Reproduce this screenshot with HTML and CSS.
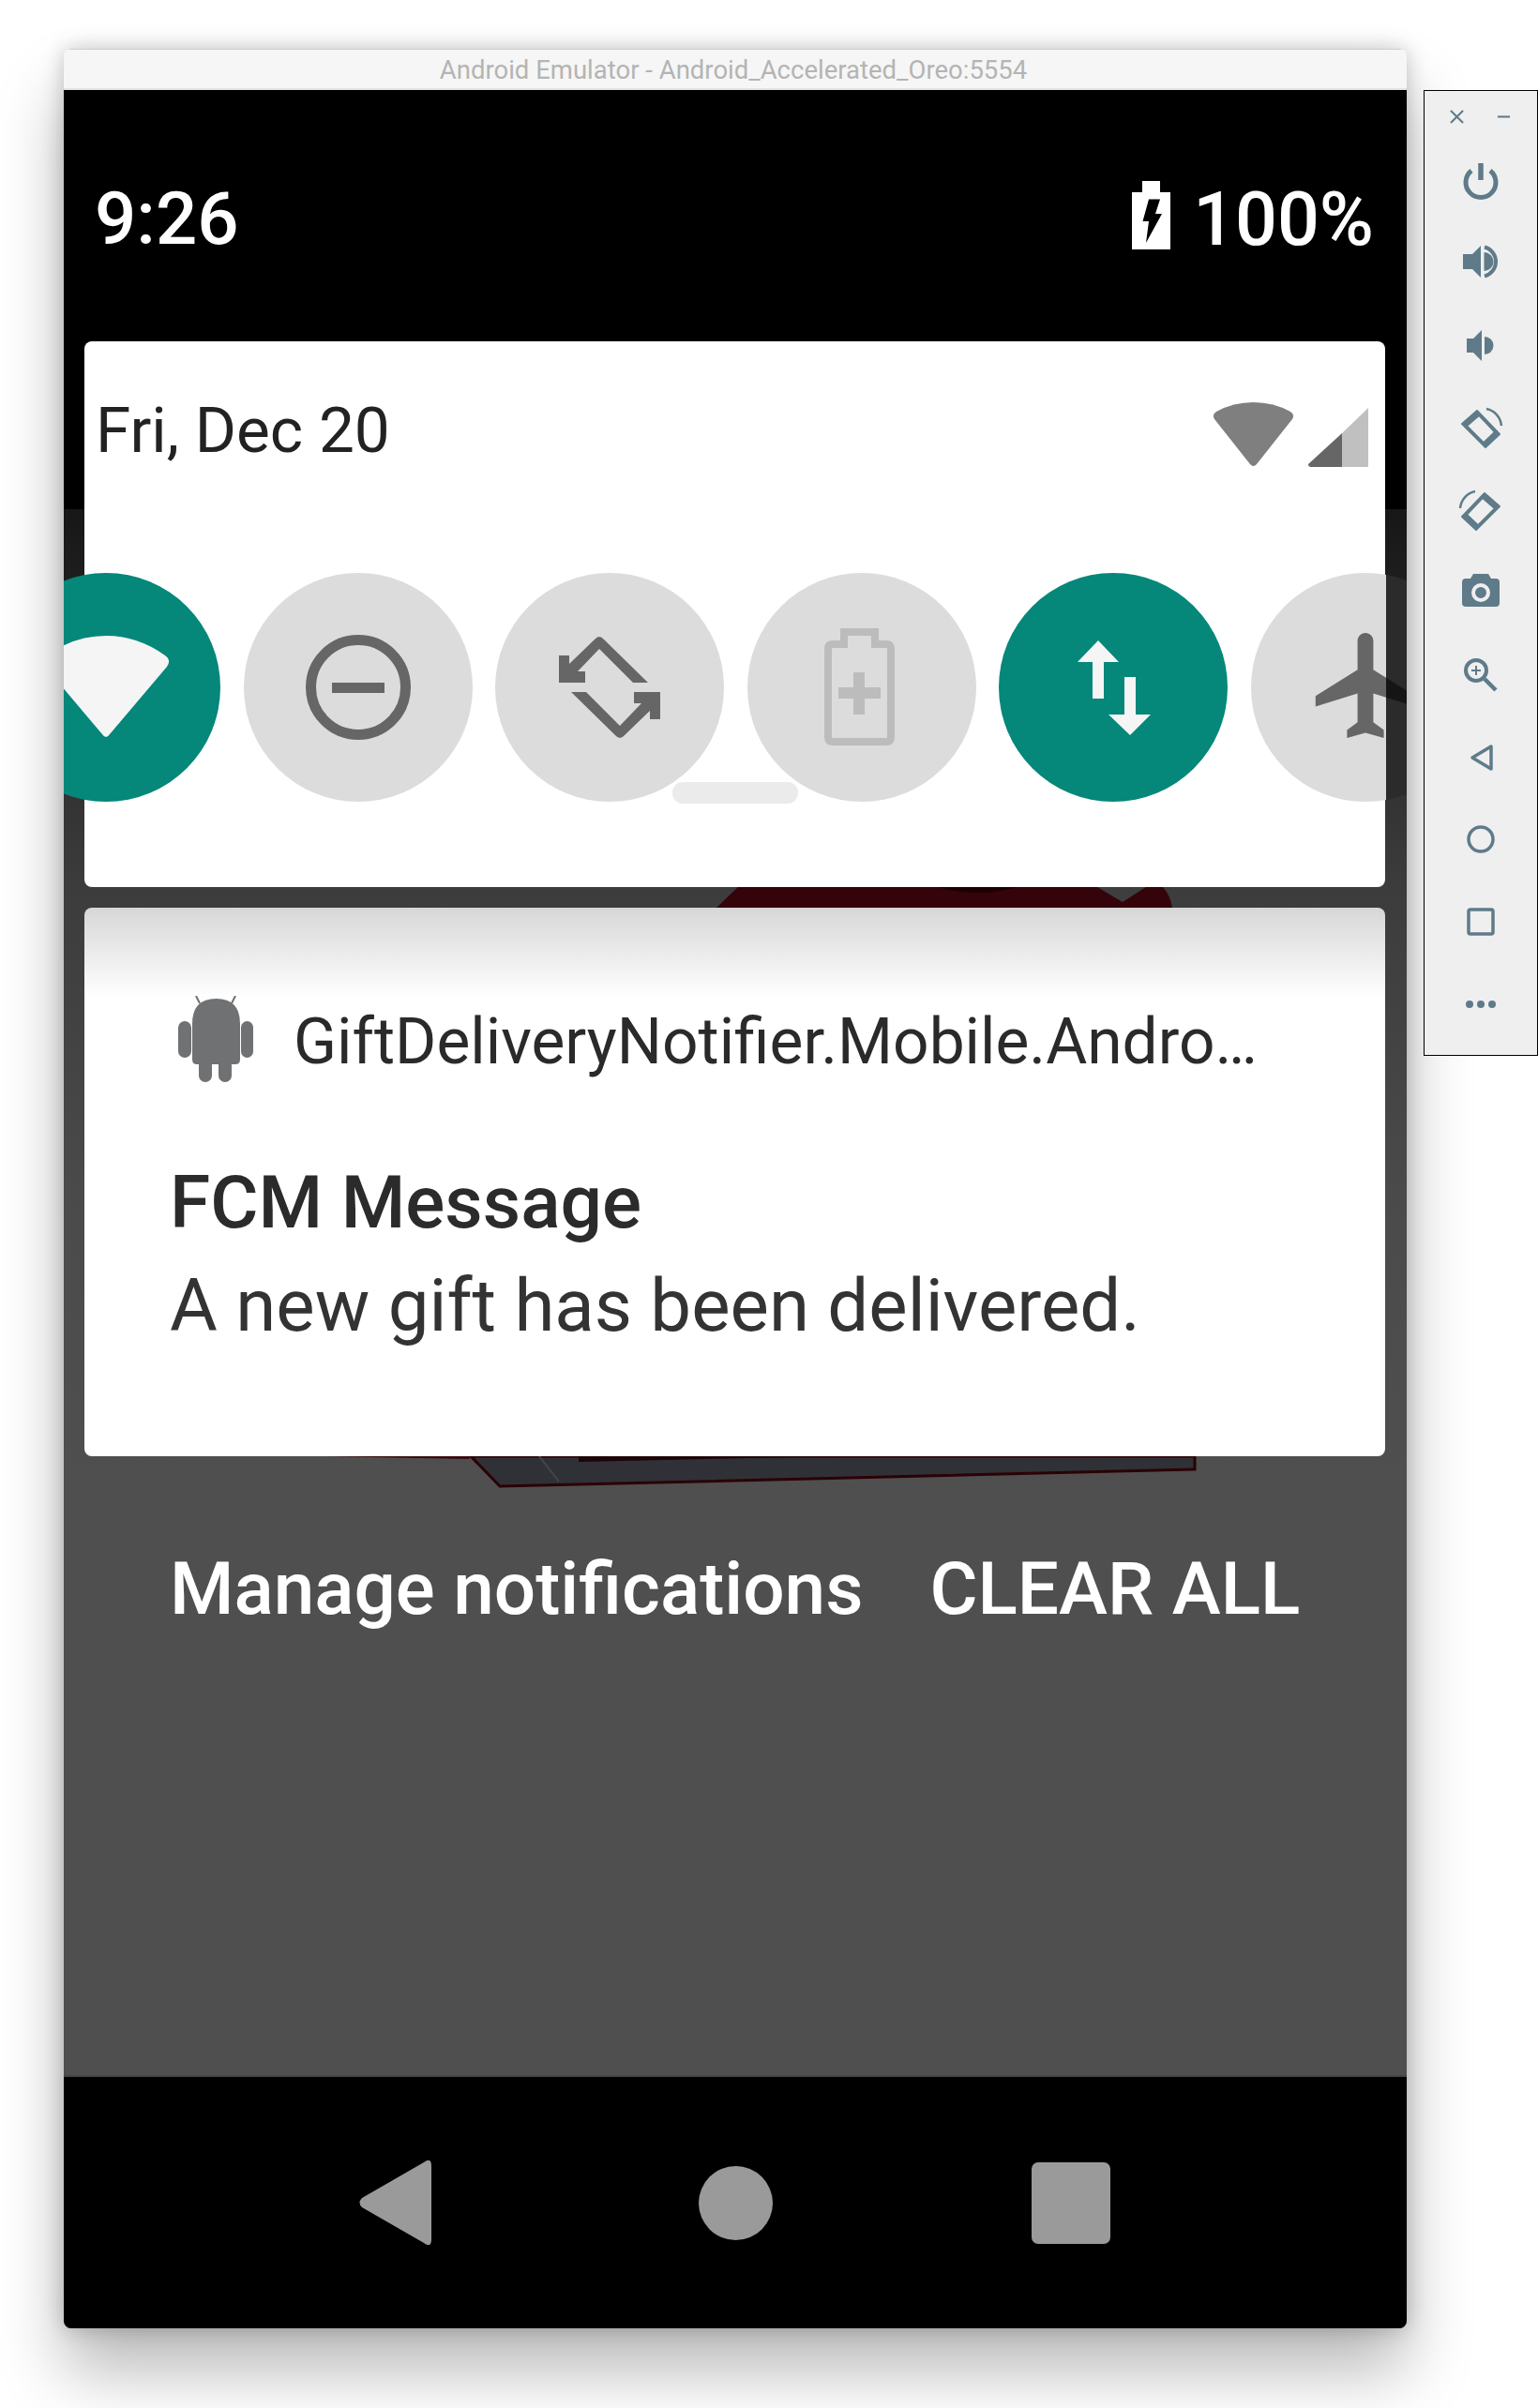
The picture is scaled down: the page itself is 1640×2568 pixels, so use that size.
FILE: index.html
```html
<!DOCTYPE html>
<html lang="en">
<head>
    <meta charset="UTF-8">
    <meta name="viewport" content="width=device-width, initial-scale=1.0">
    <title>Android Emulator</title>
    <link rel="stylesheet" href="styles.css">
</head>
<body>
    <div class="window">
        <div class="titlebar">Android Emulator - Android_Accelerated_Oreo:5554</div>
        <div class="screen">
            <!-- app behind the shade, only bits of it show between the cards -->
            <svg class="backdrop" viewBox="68 96 1432 2387">
                <path d="M787 946 L764 968 H1250 Q1248 955 1240 946Z" fill="#35030a"/>
                <path d="M1170 946 L1197 962 L1222 946Z" fill="#3e3e3e"/>
                <path d="M1000 946 Q1040 958 1085 946Z" fill="#1c0003"/>
                <path d="M345 1553 L500 1556 L502 1553Z" fill="#3a0a0e"/>
                <path d="M502 1553 L533 1585 L1274 1567 V1553Z" fill="#303136" stroke="#2a0206" stroke-width="3"/>
                <path d="M617 1553 V1559 L890 1553Z" fill="#1d0508"/>
                <path d="M575 1553 L596 1580" fill="none" stroke="#45464b" stroke-width="2"/>
            </svg>

            <div class="statusbar">
                <span class="clock">9:26</span>
                <div class="status-right">
                    <svg class="status-battery" viewBox="0 0 41 73">
                        <path d="M11 0H30V12H41V73H0V12H11Z" fill="#fff"/>
                        <path d="M18 19.5H30L25 35H32L15 66L18 43H11.5Z" fill="#000"/>
                    </svg>
                    <span class="percent">100%</span>
                </div>
            </div>

            <div class="qs">
                <div class="qs-top">
                    <span class="date">Fri, Dec 20</span>
                    <div class="qs-signal">
                        <svg class="qs-wifi" viewBox="0 0 87 68">
                            <path d="M40 66L2 18Q-1 13 4 10Q22 0 43.500 0Q65 0 83 10Q88 13 85 18L47 66Q43.500 70 40 66Z" fill="#7f7f7f"/>
                        </svg>
                        <svg class="qs-cell" viewBox="0 0 64 63">
                            <path d="M36 27L64 0V63H36Z" fill="#c0c0c0"/>
                            <path d="M0 60L36 27V63H3Q0 63 0 60Z" fill="#666"/>
                        </svg>
                    </div>
                </div>
                <div class="tiles">
                    <div class="tile tile-on">
                        <svg viewBox="0 0 244 244">
                            <path d="M118 172L57 100Q52 93 59 88Q88 67 122 67Q156 67 185 88Q192 93 187 100L126 172Q122 178 118 172Z" fill="#f5f5f5"/>
                        </svg>
                    </div>
                    <div class="tile">
                        <svg viewBox="0 0 244 244">
                            <circle cx="122" cy="122" r="50.500" fill="none" stroke="#666" stroke-width="11"/>
                            <rect x="94" y="117" width="56" height="11" fill="#666"/>
                        </svg>
                    </div>
                    <div class="tile">
                        <svg viewBox="0 0 244 244">
                            <g transform="translate(122 122)" fill="#666">
                                <path d="M-54 -5V-34H-43V-25L-16 -51Q-11 -57 -6 -51L41 -5H25L-11 -41L-34 -17H-26V-5Z"/>
                                <path transform="rotate(180)" d="M-54 -5V-34H-43V-25L-16 -51Q-11 -57 -6 -51L41 -5H25L-11 -41L-34 -17H-26V-5Z"/>
                            </g>
                        </svg>
                    </div>
                    <div class="tile">
                        <svg viewBox="0 0 244 244">
                            <path d="M103 63H136V76H148Q153 76 153 81V175Q153 180 148 180H91Q86 180 86 175V81Q86 76 91 76H103Z" fill="none" stroke="#bcbcbc" stroke-width="8"/>
                            <rect x="97" y="122" width="45" height="12" fill="#bcbcbc"/>
                            <rect x="113" y="106" width="12" height="45" fill="#bcbcbc"/>
                        </svg>
                    </div>
                    <div class="tile tile-on">
                        <svg viewBox="0 0 244 244">
                            <path d="M106 72L128 95H112V134H100V95H84Z" fill="#f5f5f5"/>
                            <path d="M134 111H146V151H162L140 173L117 151H134Z" fill="#f5f5f5"/>
                        </svg>
                    </div>
                    <!-- last tile runs past the card, the part outside sits under the scrim -->
                    <svg class="tile-plane" viewBox="0 0 244 244">
                        <defs>
                            <clipPath id="in-card"><rect width="144" height="244"/></clipPath>
                            <clipPath id="off-card"><rect x="144" width="100" height="244"/></clipPath>
                            <path id="plane" d="M21 16v-2l-8-5V3.500c0-.83-.67-1.500-1.500-1.500S10 2.670 10 3.500V9l-8 5v2l8-2.500V19l-2 1.500V22l3.500-1 3.500 1v-1.500L13 19v-5.500l8 2.500z"/>
                        </defs>
                        <g clip-path="url(#in-card)">
                            <circle cx="122" cy="122" r="122" fill="#dcdcdc"/>
                            <use href="#plane" transform="translate(57.600 52.800) scale(5.600)" fill="#666"/>
                        </g>
                        <g clip-path="url(#off-card)">
                            <circle cx="122" cy="122" r="122" fill="#2b2b2b"/>
                            <use href="#plane" transform="translate(57.600 52.800) scale(5.600)" fill="#151515"/>
                        </g>
                    </svg>
                </div>
                <div class="handle"></div>
            </div>

            <div class="notif">
                <div class="notif-head">
                    <svg class="notif-icon" viewBox="0 0 80 92">
                        <g fill="#707173">
                            <path d="M15 30Q15 3 40.500 3Q66 3 66 30V68Q66 73 61 73H20Q15 73 15 68Z"/>
                            <rect x="0" y="27" width="14" height="39" rx="7"/>
                            <rect x="67" y="27" width="13" height="39" rx="6.500"/>
                            <rect x="22" y="60" width="14" height="32" rx="7"/>
                            <rect x="43" y="60" width="14" height="32" rx="7"/>
                        </g>
                        <path d="M23 8L19 0M57 8L61 0" stroke="#707173" stroke-width="2"/>
                    </svg>
                    <span class="notif-app">GiftDeliveryNotifier.Mobile.Andro…</span>
                </div>
                <div class="notif-title">FCM Message</div>
                <div class="notif-text">A new gift has been delivered.</div>
            </div>

            <div class="actions">
                <span>Manage notifications</span>
                <span>CLEAR ALL</span>
            </div>

            <div class="navbar">
                <svg class="nav-back" viewBox="0 0 78 90">
                    <path d="M70 2Q78 -4 78 6V84Q78 94 70 88L4 50Q-1 45 4 40Z" fill="#9a9a9a"/>
                </svg>
                <div class="nav-home"></div>
                <div class="nav-recent"></div>
            </div>
        </div>
    </div>

    <div class="toolbar">
        <div class="tool-head">
            <svg viewBox="0 0 16 16"><path d="M1 1L15 15M15 1L1 15"/></svg>
            <svg viewBox="0 0 16 16"><path d="M1 8H15"/></svg>
        </div>
        <div class="tool">
            <svg viewBox="0 0 48 48">
                <path class="line" d="M24 6V24" stroke-width="5.500"/>
                <path class="line" d="M14 14A16 16 0 1 0 34 14" stroke-width="5"/>
            </svg>
        </div>
        <div class="tool">
            <svg viewBox="0 0 48 48">
                <path d="M5 15H15L24 6V40L15 31H5Z"/>
                <path d="M27.500 13A10 10 0 0 1 27.500 33Z"/>
                <path class="line" d="M28 7.500A16 16 0 0 1 28 38.500" stroke-width="4"/>
            </svg>
        </div>
        <div class="tool">
            <svg viewBox="0 0 48 48">
                <path d="M9 17H16L25 8V41L16 32H9Z"/>
                <path d="M28 15A9.500 9.500 0 0 1 28 34Z"/>
            </svg>
        </div>
        <div class="tool">
            <svg viewBox="0 0 48 48">
                <path class="phone" d="M4 20L20 6L44 31L29 45ZM9 22.300L22 10.900L39 28.700L27 40.100Z"/>
                <path class="line" d="M30 4A20 20 0 0 1 46 22" stroke-width="2.500"/>
            </svg>
        </div>
        <div class="tool">
            <svg viewBox="0 0 48 48">
                <g transform="translate(48 0) scale(-1 1)">
                    <path class="phone" d="M4 20L20 6L44 31L29 45ZM9 22.300L22 10.900L39 28.700L27 40.100Z"/>
                    <path class="line" d="M30 4A20 20 0 0 1 46 22" stroke-width="2.500"/>
                </g>
            </svg>
        </div>
        <div class="tool">
            <svg viewBox="0 0 48 48">
                <path d="M16 5H32L35 10H40Q44 10 44 14V36Q44 40 40 40H8Q4 40 4 36V14Q4 10 8 10H13Z"/>
                <circle class="lens" cx="24" cy="25" r="8"/>
            </svg>
        </div>
        <div class="tool">
            <svg viewBox="0 0 48 48">
                <circle class="line" cx="19" cy="20" r="11" stroke-width="4"/>
                <path class="line" d="M14 20H24M19 15V25" stroke-width="2"/>
                <path class="line" d="M28 29L40 41" stroke-width="4.500"/>
            </svg>
        </div>
        <div class="tool">
            <svg viewBox="0 0 48 48"><path class="line" d="M15 25L35 13V37Z" stroke-width="3.500"/></svg>
        </div>
        <div class="tool">
            <svg viewBox="0 0 48 48"><circle class="line" cx="24" cy="24" r="13" stroke-width="3.500"/></svg>
        </div>
        <div class="tool">
            <svg viewBox="0 0 48 48"><rect class="line" x="11" y="11" width="26" height="26" rx="2" stroke-width="3.500"/></svg>
        </div>
        <div class="tool">
            <svg viewBox="0 0 48 48">
                <circle cx="12" cy="24" r="4"/>
                <circle cx="24" cy="24" r="4"/>
                <circle cx="36" cy="24" r="4"/>
            </svg>
        </div>
    </div>
</body>
</html>
```

FILE: styles.css
```css
body {
    margin: 0;
    height: 2568px;
    padding: 52px 0 0 68px;
    box-sizing: border-box;
    display: flex;
    align-items: flex-start;
    background-color: #fff;
    font-family: Roboto, sans-serif;
    overflow: hidden;
}

.window {
    width: 1432px;
    height: 2431px;
    flex-shrink: 0;
    display: flex;
    flex-direction: column;
    border-radius: 8px;
    overflow: hidden;
    box-shadow: 0 45px 70px rgba(0, 0, 0, 0.28), 0 0 22px rgba(0, 0, 0, 0.22);
}

.titlebar {
    height: 44px;
    box-sizing: border-box;
    background-color: #f6f6f6;
    border-top: 1px solid #cfcfcf;
    border-bottom: 2px solid #e4e4e4;
    text-align: center;
    color: #b4b4b4;
    font-size: 27.5px;
    line-height: 43px;
    padding-right: 4px;
}

.screen {
    flex: 1;
    position: relative;
    display: flex;
    flex-direction: column;
    background: linear-gradient(#000 0, #000 447px, #171717 447px, #3c3c3c 850px, #4b4b4b 1200px, #4f4f4f 1500px);
}

.backdrop {
    position: absolute;
    left: 0;
    top: 0;
    width: 1432px;
    height: 2387px;
}

.statusbar {
    height: 268px;
    flex-shrink: 0;
    position: relative;
    display: flex;
    justify-content: space-between;
    align-items: flex-start;
    padding: 91px 35px 0 33px;
    box-sizing: border-box;
    color: #fff;
    font-size: 79px;
    font-weight: 500;
    line-height: 94px;
}

.clock {
    font-size: 78px;
}

.status-right {
    display: flex;
    align-items: flex-start;
    gap: 24px;
}

.status-battery {
    width: 41px;
    height: 73px;
    margin-top: 6px;
}

.qs {
    height: 582px;
    flex-shrink: 0;
    margin: 0 23px 0 22px;
    position: relative;
    background-color: #fff;
    border-radius: 8px;
}

.qs-top {
    height: 247px;
    display: flex;
    justify-content: space-between;
    padding: 0 18px 0 12px;
    color: #222;
}

.date {
    font-size: 67.5px;
    line-height: 78px;
    margin-top: 56px;
}

.qs-signal {
    display: flex;
    align-items: flex-start;
    gap: 15px;
    padding-top: 65px;
}

.qs-wifi {
    width: 87px;
    height: 68px;
}

.qs-cell {
    width: 64px;
    height: 63px;
    margin-top: 6px;
}

.tiles {
    display: flex;
    gap: 24.5px;
    margin-left: -99px;
}

.tile, .tile-plane {
    width: 244px;
    height: 244px;
    flex-shrink: 0;
}

.tile {
    border-radius: 50%;
    background-color: #dcdcdc;
}

.tile svg {
    display: block;
    width: 244px;
    height: 244px;
}

.tile-on {
    background-color: #05877a;
}

.handle {
    position: absolute;
    left: 627px;
    top: 470px;
    width: 134px;
    height: 23px;
    background-color: #ebebeb;
    border-radius: 11px;
}

.notif {
    height: 585px;
    flex-shrink: 0;
    margin: 22px 23px 0 22px;
    position: relative;
    box-sizing: border-box;
    padding: 94px 0 0 91px;
    background: linear-gradient(#d7d7d7, #fff 96px);
    border-radius: 8px;
}

.notif-head {
    display: flex;
    align-items: center;
    gap: 43px;
    color: #2a2a2a;
}

.notif-icon {
    width: 80px;
    height: 92px;
    margin-left: 9px;
}

.notif-app {
    font-size: 67.6px;
    line-height: 78px;
    white-space: nowrap;
    margin-top: 6px;
}

.notif-title {
    margin-top: 83px;
    font-size: 78.5px;
    line-height: 90px;
    font-weight: 500;
    color: #2b2b2b;
}

.notif-text {
    margin-top: 21px;
    font-size: 78px;
    line-height: 90px;
    color: #333;
}

.actions {
    position: relative;
    display: flex;
    gap: 71px;
    margin-top: 96px;
    padding-left: 113px;
    color: #fff;
    font-size: 78.3px;
    line-height: 90px;
    font-weight: 500;
}

.navbar {
    margin-top: auto;
    height: 270px;
    position: relative;
    display: flex;
    align-items: center;
    background-color: #000;
    border-top: 2px solid #444;
    box-sizing: border-box;
    padding-left: 314px;
}

.nav-back {
    width: 78px;
    height: 90px;
}

.nav-home {
    width: 79px;
    height: 79px;
    margin-left: 285px;
    border-radius: 50%;
    background-color: #9a9a9a;
}

.nav-recent {
    width: 84px;
    height: 87px;
    margin-left: 276px;
    border-radius: 7px;
    background-color: #9a9a9a;
}

.toolbar {
    width: 122px;
    height: 1030px;
    flex-shrink: 0;
    margin: 44px 0 0 18px;
    box-sizing: border-box;
    border: 1.5px solid #000;
    background-color: #efefef;
    position: relative;
}

.tool-head {
    height: 51px;
    display: flex;
    align-items: flex-end;
    gap: 35px;
    padding: 0 0 16px 27px;
    box-sizing: border-box;
}

.tool-head svg {
    width: 15px;
    height: 15px;
    fill: none;
    stroke: #5f7b8a;
    stroke-width: 2.2;
}

.tool {
    height: 87.9px;
    display: flex;
    justify-content: center;
    align-items: center;
}

.tool svg {
    width: 48px;
    height: 48px;
    fill: #5f7b8a;
    overflow: visible;
}

.tool .line {
    fill: none;
    stroke: #5f7b8a;
    stroke-linejoin: round;
}

.tool .phone {
    fill-rule: evenodd;
    stroke: #5f7b8a;
    stroke-width: 2;
    stroke-linejoin: round;
}

.tool .lens {
    fill: none;
    stroke: #efefef;
    stroke-width: 4;
}
```
